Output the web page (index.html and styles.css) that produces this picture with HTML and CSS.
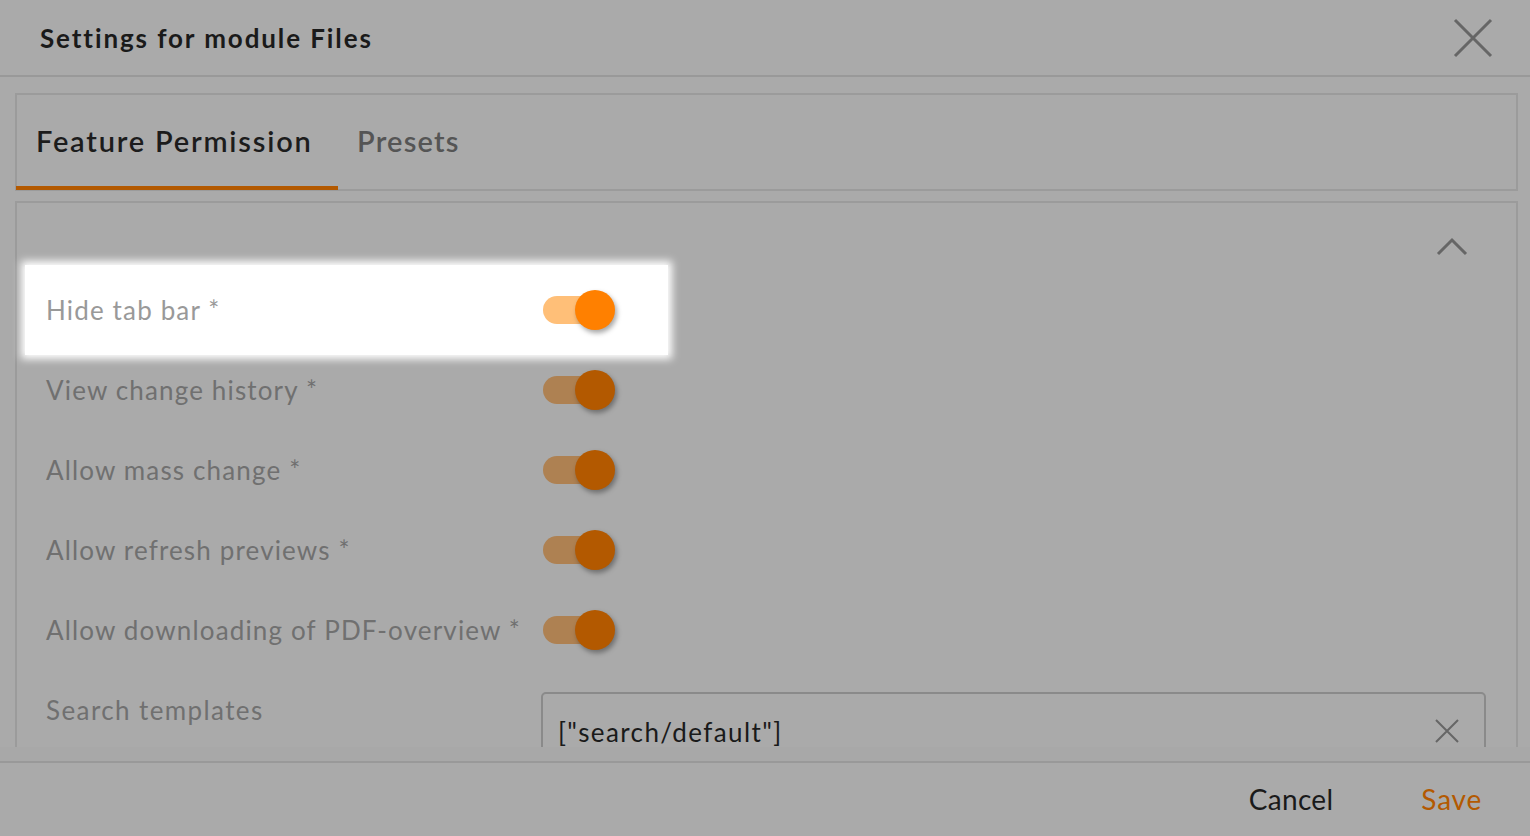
FILE: index.html
```html
<!DOCTYPE html>
<html lang="en">
<head>
    <meta charset="UTF-8">
    <meta name="viewport" content="width=device-width, initial-scale=1.0">
    <title>Settings for module Files</title>
    <link rel="stylesheet" href="styles.css">
</head>
<body>
    <div class="dialog">
        <header class="dialog-head">
            <h1>Settings for module Files</h1>
            <button class="close" aria-label="Close">
                <svg width="40" height="40" viewBox="0 0 40 40"><path d="M2 2L38 38M38 2L2 38" stroke="#666" stroke-width="3" fill="none"/></svg>
            </button>
        </header>

        <main class="dialog-body">
            <div class="scroll">
                <nav class="tabs">
                    <span class="tab active">Feature Permission</span>
                    <span class="tab">Presets</span>
                </nav>

                <section class="panel">
                    <div class="panel-top">
                        <svg width="32" height="20" viewBox="0 0 32 20"><path d="M2 17L16 3L30 17" stroke="#666" stroke-width="3" fill="none"/></svg>
                    </div>

                    <div class="row spot">
                        <label>Hide tab bar *</label>
                        <span class="toggle on"><span class="knob"></span></span>
                    </div>
                    <div class="row">
                        <label>View change history *</label>
                        <span class="toggle"><span class="knob"></span></span>
                    </div>
                    <div class="row">
                        <label>Allow mass change *</label>
                        <span class="toggle"><span class="knob"></span></span>
                    </div>
                    <div class="row">
                        <label>Allow refresh previews *</label>
                        <span class="toggle"><span class="knob"></span></span>
                    </div>
                    <div class="row">
                        <label>Allow downloading of PDF-overview *</label>
                        <span class="toggle"><span class="knob"></span></span>
                    </div>
                    <div class="row row-input">
                        <label>Search templates</label>
                        <div class="input">
                            <span>["search/default"]</span>
                            <svg width="26" height="26" viewBox="0 0 26 26"><path d="M2 2L24 24M24 2L2 24" stroke="#666" stroke-width="2" fill="none"/></svg>
                        </div>
                    </div>
                </section>
            </div>
        </main>

        <footer class="dialog-foot">
            <button class="btn">Cancel</button>
            <button class="btn primary">Save</button>
        </footer>
    </div>
</body>
</html>
```

FILE: styles.css
```css
html, body {
    margin: 0;
    padding: 0;
    height: 100%;
}
body {
    font-family: Lato, "Open Sans", sans-serif;
    background-color: #aaaaaa;
    color: #1a1a1a;
    overflow: hidden;
}
.dialog {
    display: flex;
    flex-direction: column;
    height: 836px;
}
.dialog-head {
    height: 75px;
    border-bottom: 2px solid #999;
    display: flex;
    align-items: center;
    justify-content: space-between;
    padding: 0 37px 0 40px;
}
.dialog-head h1 {
    margin: 0;
    font-size: 26px;
    font-weight: 700;
    letter-spacing: 1.9px;
    color: #1a1a1a;
}
.close {
    background: none;
    border: 0;
    padding: 0;
    width: 40px;
    height: 40px;
    cursor: pointer;
}
.close svg {
    display: block;
}
.dialog-body {
    flex: 1;
    display: flex;
    flex-direction: column;
    min-height: 0;
    padding-bottom: 14px;
    background-color: #a8a8a8;
}
.scroll {
    flex: 1;
    overflow: hidden;
    padding: 16px 12px 0 15px;
    background-color: #aaaaaa;
}
.tabs {
    display: flex;
    height: 94px;
    border: 2px solid #9b9b9b;
}
.tab {
    display: flex;
    align-items: center;
    padding: 0 20px 0 19px;
    font-size: 29px;
    font-weight: 600;
    letter-spacing: 1.2px;
    color: #555;
    border-bottom: 4px solid transparent;
    margin-bottom: -1px;
}
.tab.active {
    color: #1c1c1c;
    border-bottom-color: #b35900;
    width: 282px;
    margin-left: -1px;
    padding-left: 20px;
    letter-spacing: 1.8px;
}
.panel {
    margin-top: 10px;
    border: 2px solid #9b9b9b;
    padding: 0 30px 0 29px;
}
.panel-top {
    height: 67px;
    box-sizing: border-box;
    display: flex;
    justify-content: flex-end;
    align-items: flex-start;
    padding: 34px 18px 0 0;
}
.panel-top svg {
    display: block;
}
.row {
    position: relative;
    display: flex;
    align-items: center;
    height: 80px;
}
.row label {
    width: 497px;
    flex-shrink: 0;
    font-size: 26px;
    letter-spacing: 1.15px;
    color: #707070;
    white-space: nowrap;
}
.row.spot label {
    color: #999;
}
.row.spot::before {
    content: "";
    position: absolute;
    left: -21px;
    top: -5px;
    width: 643px;
    height: 90px;
    background: #fff;
    box-shadow: 0 0 8px 4px #fff;
    z-index: 0;
}
.row.spot > * {
    position: relative;
    z-index: 1;
}
.toggle {
    position: relative;
    display: block;
    width: 64px;
    height: 28px;
    border-radius: 14px;
    background-color: #ae8152;
}
.toggle .knob {
    position: absolute;
    right: -8px;
    top: -6px;
    width: 40px;
    height: 40px;
    border-radius: 50%;
    background-color: #b35900;
    box-shadow: 2px 3px 5px rgba(0, 0, 0, 0.35);
}
.toggle.on {
    background-color: #ffbf78;
}
.toggle.on .knob {
    background-color: #ff8000;
}
.row-input {
    align-items: flex-start;
}
.row-input label {
    line-height: 80px;
    letter-spacing: 1.4px;
}
.input {
    flex: 1;
    margin: 22px 0 0 -2px;
    height: 76px;
    border: 2px solid #8a8a8a;
    border-radius: 5px;
    display: flex;
    align-items: center;
    justify-content: space-between;
    padding: 0 24px 0 15px;
    font-size: 26px;
    letter-spacing: 1.4px;
    color: #1a1a1a;
}
.input svg {
    margin-top: -2px;
}
.dialog-foot {
    height: 73px;
    border-top: 2px solid #999;
    display: flex;
    justify-content: flex-end;
    align-items: center;
    gap: 88px;
    padding: 0 48px 0 0;
}
.btn {
    background: none;
    border: 0;
    padding: 0 0 2px;
    font-family: inherit;
    font-size: 28px;
    letter-spacing: 0.3px;
    color: #1a1a1a;
    cursor: pointer;
}
.btn.primary {
    color: #b35900;
    letter-spacing: 0.8px;
}
```
